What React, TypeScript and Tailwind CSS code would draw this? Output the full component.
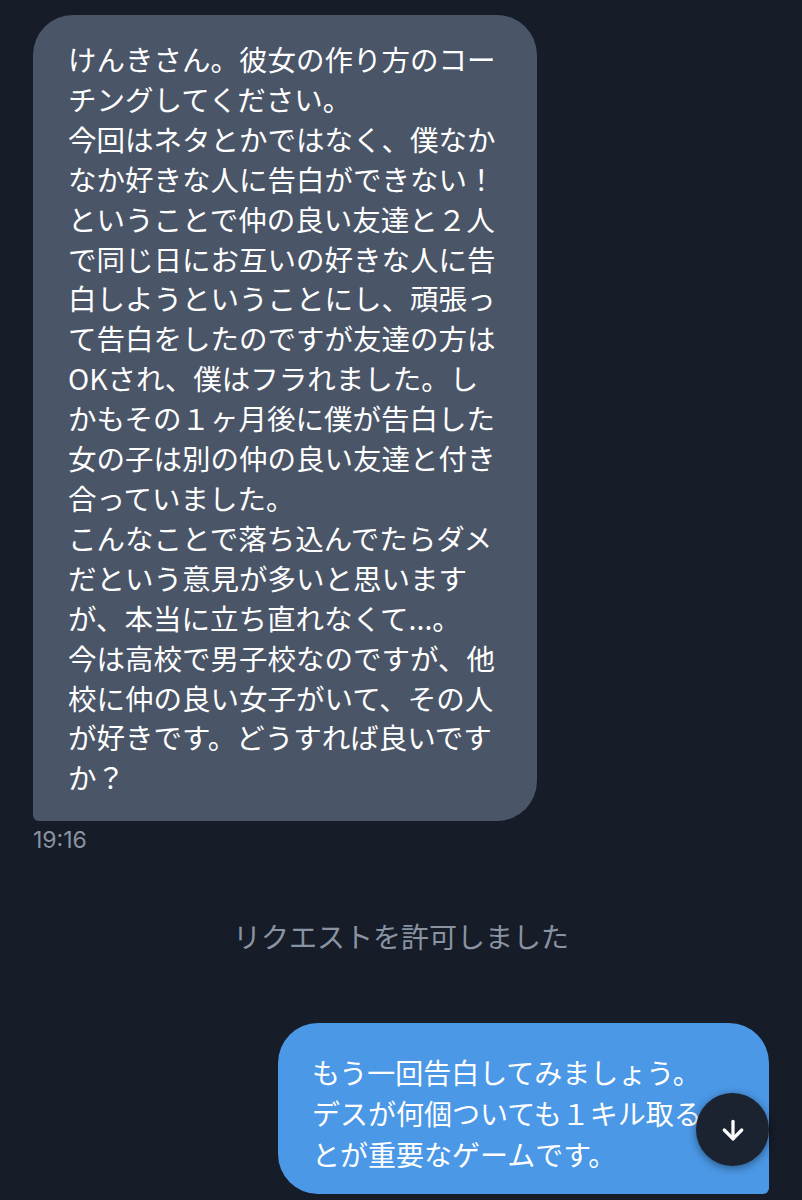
import { ArrowDown } from "lucide-react"

const received = [
  "けんきさん。彼女の作り方のコー",
  "チングしてください。",
  "今回はネタとかではなく、僕なか",
  "なか好きな人に告白ができない！",
  "ということで仲の良い友達と２人",
  "で同じ日にお互いの好きな人に告",
  "白しようということにし、頑張っ",
  "て告白をしたのですが友達の方は",
  "OKされ、僕はフラれました。し",
  "かもその１ヶ月後に僕が告白した",
  "女の子は別の仲の良い友達と付き",
  "合っていました。",
  "こんなことで落ち込んでたらダメ",
  "だという意見が多いと思います",
  "が、本当に立ち直れなくて...。",
  "今は高校で男子校なのですが、他",
  "校に仲の良い女子がいて、その人",
  "が好きです。どうすれば良いです",
  "か？",
]

const sent = [
  "もう一回告白してみましょう。",
  "デスが何個ついても１キル取るこ",
  "とが重要なゲームです。",
]

const jp = "font-['Hiragino_Sans','Noto_Sans_CJK_JP',sans-serif]"

export default function App() {
  return (
    <div className={`min-h-[1200px] h-[1200px] overflow-hidden bg-[#161c28] ${jp}`}>
      <div className="flex flex-col pt-[15px]">
        {/* incoming message */}
        <div className="ml-[33px] w-[504px] rounded-[40px] rounded-bl-[6px] bg-[#4a5567] pl-[35px] pr-4 pt-[24px] pb-[24px] text-[28.5px] leading-[39.9px] text-white">
          {received.map((line, i) => (
            <div key={i} className="whitespace-nowrap">{line}</div>
          ))}
        </div>
        <div className="ml-[33px] mt-[5px] font-['Inter',sans-serif] text-[23px] leading-[28px] text-[#8a93a2]">
          19:16
        </div>

        {/* system notice */}
        <div className="mt-[62px] text-center text-[28px] leading-[40px] text-[#8a93a2]">
          リクエストを許可しました
        </div>

        {/* outgoing message */}
        <div className="relative mt-[67px] ml-auto mr-[33px] w-[491px] rounded-[40px] rounded-br-[6px] bg-[#4b98e7] pl-[34px] pr-4 pt-[29px] pb-[19px] text-[28px] leading-[41px] text-white">
          {sent.map((line, i) => (
            <div key={i} className="whitespace-nowrap">{line}</div>
          ))}
          <button className="absolute right-0 top-[70px] flex h-[73px] w-[73px] items-center justify-center rounded-full bg-[#1b2230] text-white shadow-[0_2px_8px_rgba(0,0,0,0.45)]">
            <ArrowDown size={30} strokeWidth={2.6} />
          </button>
        </div>
        <div className="mr-[33px] mt-[4px] self-end font-['Inter',sans-serif] text-[23px] leading-[28px] text-[#8a93a2]">
          19:18
        </div>
      </div>
    </div>
  )
}
